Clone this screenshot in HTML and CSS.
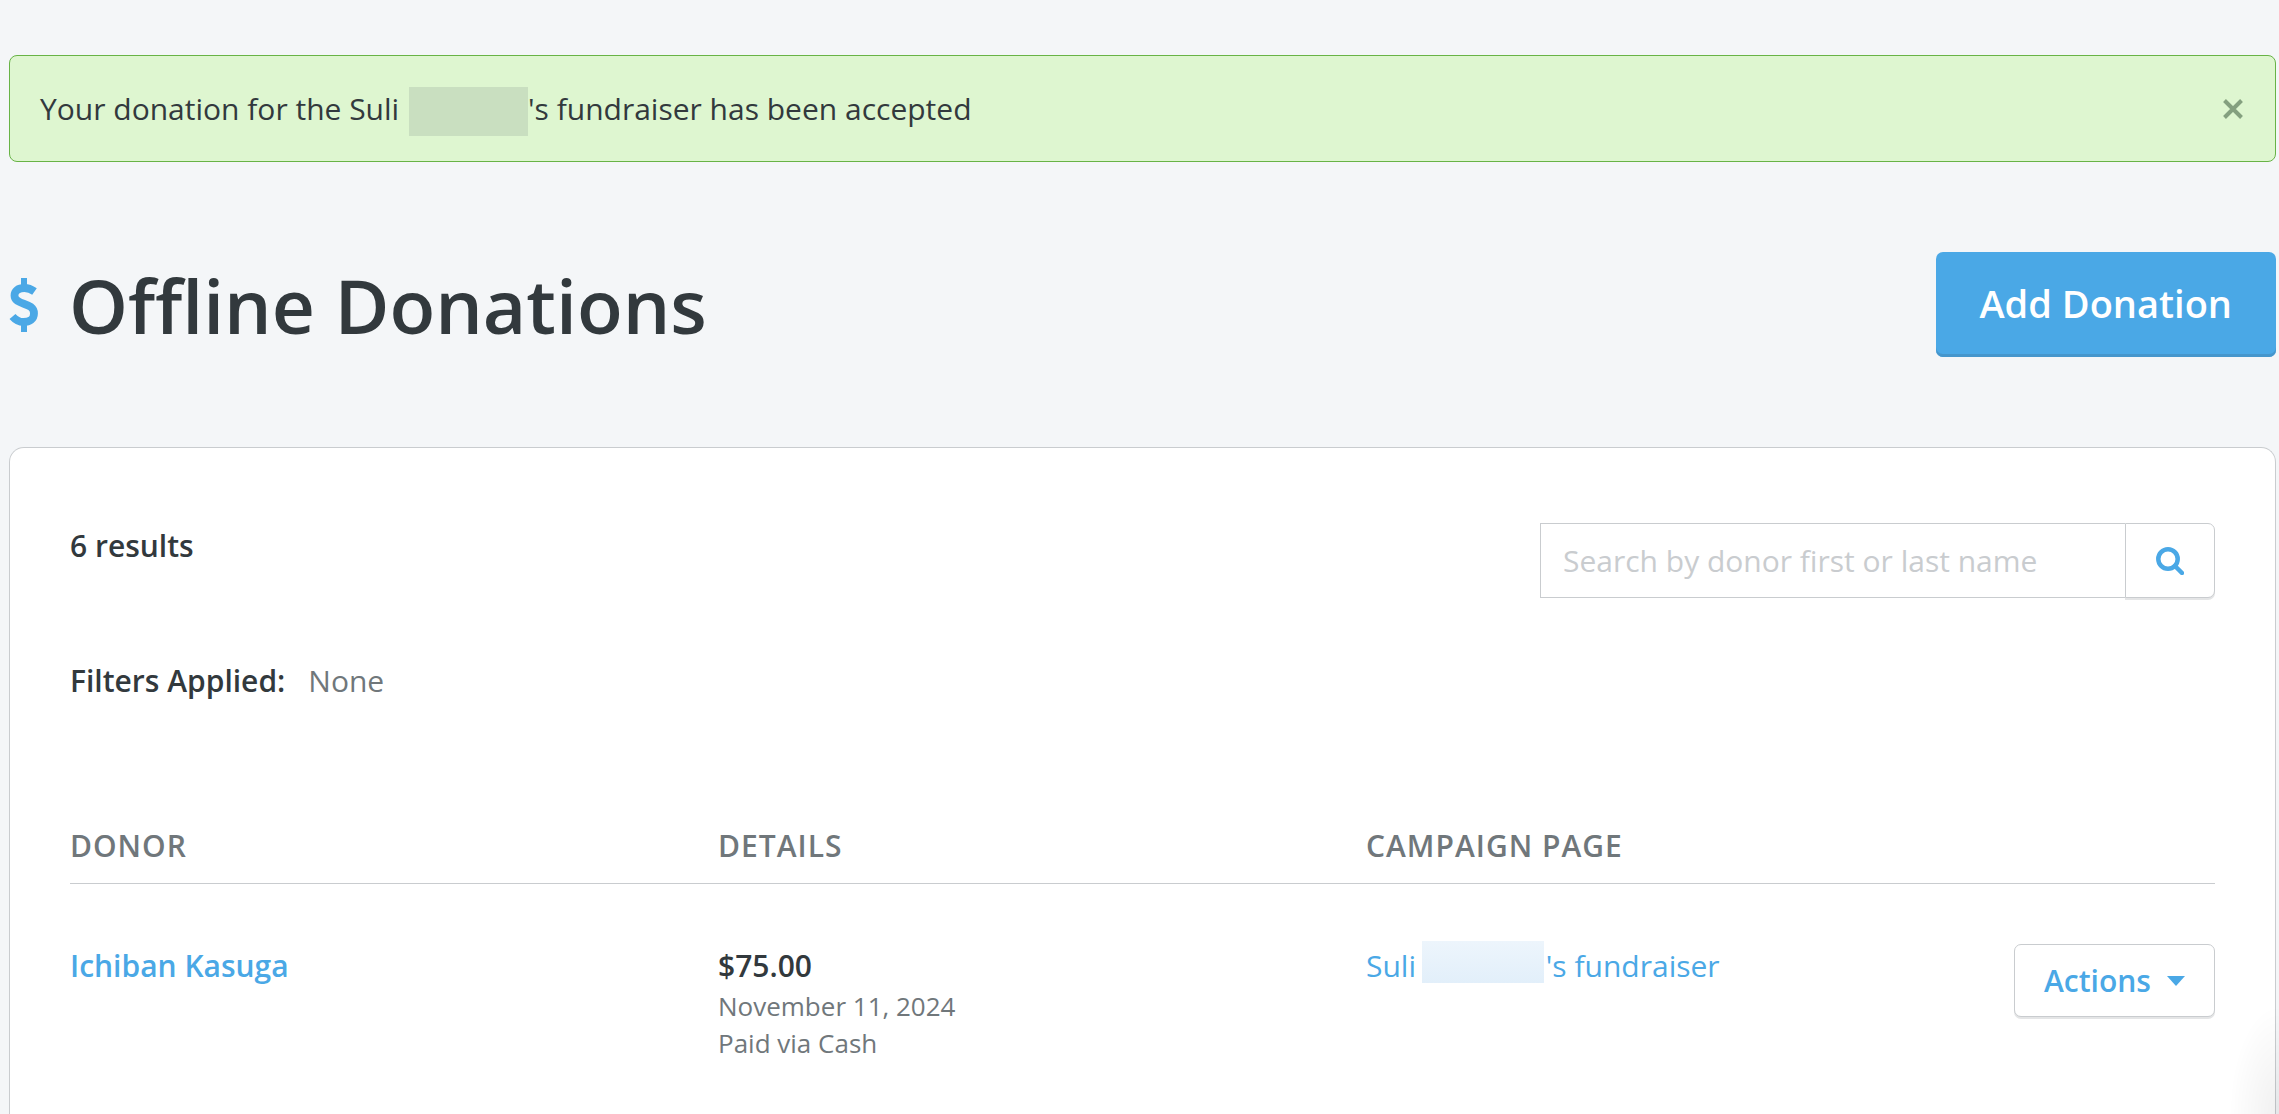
FILE: index.html
```html
<!DOCTYPE html>
<html lang="en">
<head>
<meta charset="utf-8">
<title>Offline Donations</title>
<link rel="stylesheet" href="styles.css">
</head>
<body>
<main class="page">
  <div class="alert" role="status">
    <p class="alert-text">Your donation for the Suli <span class="redacted redacted-green"></span>'s fundraiser has been accepted</p>
    <button class="alert-close" type="button" aria-label="Close">
      <svg viewBox="0 0 20 20" width="20" height="20"><path d="M1.500 1.500 18.500 18.500M18.500 1.500 1.500 18.500" fill="none" stroke="currentColor" stroke-width="4"/></svg>
    </button>
  </div>

  <header class="page-header">
    <svg class="dollar" viewBox="0 0 30 54" width="30" height="54" aria-hidden="true">
      <path d="M25.500 13.500C22 11 19 10 15.500 10C9 10 5.500 13 5.500 17.500C5.500 28 25 23.500 25 35.500C25 41 20.500 44 14.500 44C10 44 6.500 42 3.500 38.500" fill="none" stroke="currentColor" stroke-width="7.800"/>
      <path d="M15 0V9M15 45V54" fill="none" stroke="currentColor" stroke-width="6"/>
    </svg>
    <h1 class="title">Offline Donations</h1>
    <button class="btn-primary" type="button">Add Donation</button>
  </header>

  <section class="card">
    <div class="toolbar">
      <p class="results">6 results</p>
      <form class="search">
        <input class="search-input" type="text" aria-label="Search donors" placeholder="Search by donor first or last name">
        <button class="search-btn" type="button" aria-label="Search">
          <svg viewBox="0 0 28 28" width="28" height="28"><circle cx="12" cy="12" r="9.700" fill="none" stroke="currentColor" stroke-width="4.500"/><path d="M19 19 26 26" stroke="currentColor" stroke-width="4.500" stroke-linecap="round"/></svg>
        </button>
      </form>
    </div>
    <p class="filters"><strong class="filters-label">Filters Applied:</strong><span class="filters-value">None</span></p>

    <table class="donations">
      <colgroup><col><col><col><col class="col-actions"></colgroup>
      <thead>
        <tr><th scope="col">Donor</th><th scope="col">Details</th><th scope="col">Campaign Page</th><td></td></tr>
      </thead>
      <tbody>
        <tr>
          <td><a class="donor" href="#">Ichiban Kasuga</a></td>
          <td>
            <p class="amount">$75.00</p>
            <p class="detail">November 11, 2024</p>
            <p class="detail">Paid via Cash</p>
          </td>
          <td><a href="#">Suli <span class="redacted redacted-blue"></span>'s fundraiser</a></td>
          <td><button class="btn-actions" type="button">Actions<svg viewBox="0 0 18 10" width="18" height="10" aria-hidden="true"><path d="M0 0H18L9 10Z" fill="currentColor"/></svg></button></td>
        </tr>
      </tbody>
    </table>
  </section>
</main>
<div class="corner-glow"></div>
</body>
</html>
```

FILE: styles.css
```css
* {
  box-sizing: border-box;
}

html {
  height: 100%;
  overflow: hidden;
}

body {
  margin: 0;
  min-height: 100%;
  display: flex;
  background: #f4f6f8;
  color: #32393d;
  font-family: "Open Sans", "Noto Sans", sans-serif;
  font-size: 30px;
  line-height: 44px;
}

p,
h1 {
  margin: 0;
}

a {
  color: #4aa8e6;
  text-decoration: none;
}

button,
input {
  font: inherit;
  margin: 0;
}

svg {
  display: block;
}

.page {
  flex: 1;
  display: flex;
  flex-direction: column;
  padding: 55px 3px 0 9px;
}

.alert {
  display: flex;
  align-items: center;
  justify-content: space-between;
  padding: 28px 32px 28px 30px;
  border: 1px solid #68b346;
  border-radius: 8px;
  background: #def6d0;
}

.alert-text {
  height: 49px;
  line-height: 49px;
}

.alert-close {
  padding: 0;
  border: 0;
  background: none;
  color: #84a07f;
}

.redacted {
  display: inline-block;
  vertical-align: middle;
}

.redacted-green {
  width: 119px;
  height: 49px;
  margin-left: 2px;
  background: #c9dfc0;
}

.redacted-blue {
  width: 122px;
  height: 42px;
  margin: -14px 2px 0 -2px;
  background: linear-gradient(#edf5fc, #e2effa);
}

.page-header {
  display: flex;
  align-items: center;
  margin: 90px 0;
}

.dollar {
  color: #4aa8e6;
}

.title {
  flex: 1;
  padding-left: 30px;
  font-size: 75px;
  font-weight: 600;
  line-height: 104px;
}

.btn-primary {
  padding: 25px 44px 28px;
  border: 0;
  border-radius: 7px;
  background: #4aa8e6;
  box-shadow: inset 0 -3px #4596cc;
  color: #fff;
  font-size: 38px;
  font-weight: 600;
  line-height: 52px;
}

.card {
  flex: 1;
  padding: 75px 60px 40px;
  border: 1px solid #c9cccf;
  border-bottom: 0;
  border-radius: 15px 15px 0 0;
  background: #fff;
}

.toolbar {
  display: flex;
  align-items: flex-start;
  justify-content: space-between;
}

.results {
  line-height: 46px;
}

.results,
.filters-label,
.donor,
.amount {
  font-weight: 600;
}

.search {
  display: flex;
}

.search-input {
  width: 585px;
  height: 75px;
  padding: 0 22px;
  border: 1px solid #c9cccf;
  border-right: 0;
  background: #fff;
  color: inherit;
}

.search-input::placeholder {
  color: #c9cccf;
  opacity: 1;
}

.search-btn {
  display: flex;
  align-items: center;
  justify-content: center;
  width: 90px;
  height: 75px;
  padding: 0;
  border: 1px solid #c9cccf;
  border-radius: 0 7px 7px 0;
  background: #fff;
  box-shadow: 0 2px #e4e5e6;
  color: #4aa8e6;
}

.filters {
  display: flex;
  gap: 23px;
  margin: 61px 0 121px;
}

.filters-value {
  color: #70777b;
}

.donations {
  width: 100%;
  border-spacing: 0;
  table-layout: fixed;
}

.col-actions {
  width: 201px;
}

.donations th,
.donations td {
  padding: 0;
  text-align: left;
  vertical-align: top;
}

.donations thead th,
.donations thead td {
  padding-bottom: 15px;
  border-bottom: 1px solid #c9cccf;
  color: #70777b;
}

.donations th {
  font-weight: 600;
  letter-spacing: 1px;
  text-transform: uppercase;
}

.donations tbody td {
  padding-top: 60px;
}

.detail {
  color: #70777b;
  font-size: 26px;
  line-height: 37px;
}

.btn-actions {
  display: flex;
  align-items: center;
  justify-content: space-between;
  width: 100%;
  height: 73px;
  padding: 0 29px;
  border: 1px solid #c9cccf;
  border-radius: 7px;
  background: #fff;
  box-shadow: 0 2px #e4e5e6;
  color: #4aa8e6;
  font-weight: 600;
}

.corner-glow {
  position: fixed;
  right: 0;
  bottom: 0;
  width: 50px;
  height: 110px;
  background: radial-gradient(ellipse at bottom right, rgba(0, 0, 0, 0.06), rgba(0, 0, 0, 0) 70%);
  pointer-events: none;
}
```
